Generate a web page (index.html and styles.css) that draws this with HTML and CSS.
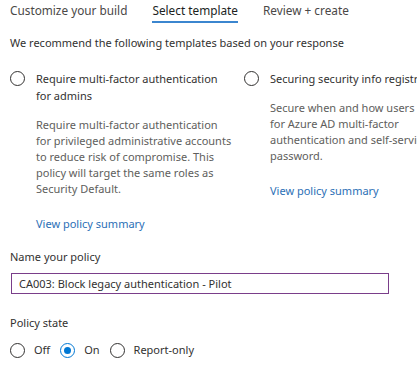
FILE: index.html
```html
<!DOCTYPE html>
<html lang="en">
<head>
    <meta charset="UTF-8">
    <title>Select template</title>
    <link rel="stylesheet" href="styles.css">
</head>
<body>
    <div class="tabs">
        <div class="tab">Customize your build</div>
        <div class="tab active">Select template</div>
        <div class="tab">Review + create</div>
    </div>

    <p class="intro">We recommend the following templates based on your response</p>

    <div class="templates">
        <div class="template">
            <span class="radio"></span>
            <div class="template-body">
                <div class="template-title">Require multi-factor authentication for admins</div>
                <div class="template-desc">Require multi-factor authentication for privileged administrative accounts to reduce risk of compromise. This policy will target the same roles as Security Default.</div>
                <a class="link" href="#">View policy summary</a>
            </div>
        </div>
        <div class="template">
            <span class="radio"></span>
            <div class="template-body">
                <div class="template-title">Securing security info registration</div>
                <div class="template-desc">Secure when and how users register for Azure AD multi-factor authentication and self-service password.</div>
                <a class="link" href="#">View policy summary</a>
            </div>
        </div>
    </div>

    <label class="field-label">Name your policy</label>
    <div class="name-input">CA003: Block legacy authentication - Pilot</div>

    <div class="field-label state-label">Policy state</div>
    <div class="state-options">
        <div class="option"><span class="radio"></span>Off</div>
        <div class="option"><span class="radio checked"></span>On</div>
        <div class="option"><span class="radio"></span>Report-only</div>
    </div>
</body>
</html>
```

FILE: styles.css
```css
html, body {
    overflow: hidden;
}
body {
    margin: 0;
    padding: 0 10px;
    width: 417px;
    height: 377px;
    box-sizing: border-box;
    background-color: #ffffff;
    color: #323130;
    font-family: "Noto Sans", "Open Sans", sans-serif;
    font-size: 11px;
}
.tabs {
    display: flex;
    gap: 25px;
}
.tab {
    font-size: 11.8px;
    line-height: 20px;
    padding-bottom: 1px;
    border-bottom: 2px solid transparent;
    color: #4a4847;
}
.tab.active {
    color: #201f1e;
    border-bottom-color: #3b86cf;
}
.intro {
    margin: 12px 0 0;
    line-height: 16px;
}
.templates {
    display: flex;
    margin-top: 19px;
    width: 480px;
}
.template {
    flex: 0 0 234px;
    display: flex;
    gap: 11px;
}
.template .radio {
    margin-top: 1px;
}
.template-body {
    width: 196px;
    flex-shrink: 0;
}
.template-title {
    line-height: 17px;
}
.template-desc {
    margin-top: 13px;
    line-height: 16px;
    color: #605e5c;
}
.link {
    display: block;
    margin-top: 19px;
    line-height: 16px;
    color: #2b6fb6;
    text-decoration: none;
}
.radio {
    flex: 0 0 auto;
    width: 15px;
    height: 15px;
    box-sizing: border-box;
    border: 1px solid #323130;
    border-radius: 50%;
    display: inline-flex;
    align-items: center;
    justify-content: center;
}
.radio.checked {
    border-color: #0078d4;
}
.radio.checked::after {
    content: "";
    width: 7px;
    height: 7px;
    border-radius: 50%;
    background-color: #0078d4;
}
.field-label {
    display: block;
    margin-top: 17px;
    line-height: 16px;
}
.name-input {
    margin: 8px 0 0 1px;
    width: 378px;
    height: 21px;
    box-sizing: border-box;
    border: 1px solid #7a3e8a;
    padding-left: 7px;
    line-height: 19px;
}
.state-label {
    margin-top: 21px;
}
.state-options {
    display: flex;
    gap: 10px;
    margin-top: 11px;
    line-height: 16px;
}
.option {
    display: flex;
    align-items: center;
    gap: 9px;
}
```
